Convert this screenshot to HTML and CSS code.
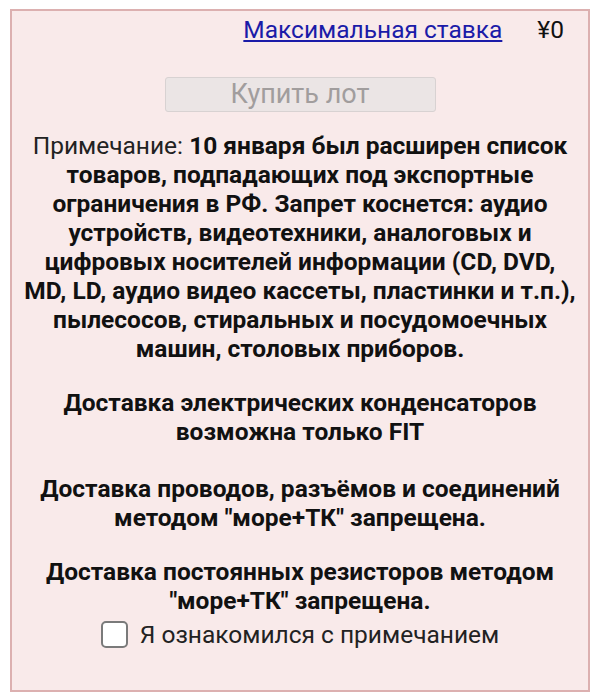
FILE: index.html
```html
<!DOCTYPE html>
<html lang="ru">
<head>
    <meta charset="UTF-8">
    <meta name="viewport" content="width=device-width, initial-scale=1.0">
    <title>Купить лот</title>
    <link rel="stylesheet" href="styles.css">
</head>
<body>

    <div class="lot-box">
        <div class="bid-row">
            <a href="#" class="bid-link">Максимальная ставка</a>
            <span class="bid-value">¥0</span>
        </div>

        <button class="buy-btn" disabled>Купить лот</button>

        <p class="note">
            Примечание: <b>10 января был расширен список товаров, подпадающих под экспортные ограничения в РФ. Запрет коснется: аудио устройств, видеотехники, аналоговых и цифровых носителей информации (CD, DVD, MD, LD, аудио видео кассеты, пластинки и т.п.), пылесосов, стиральных и посудомоечных машин, столовых приборов.</b>
        </p>

        <p class="warn">Доставка электрических конденсаторов<br>возможна только FIT</p>
        <p class="warn wide">Доставка проводов, разъёмов и соединений<br>методом "море+ТК" запрещена.</p>
        <p class="warn">Доставка постоянных резисторов методом<br>"море+ТК" запрещена.</p>

        <label class="agree">
            <input type="checkbox" class="agree-box">
            <span>Я ознакомился с примечанием</span>
        </label>
    </div>

</body>
</html>
```

FILE: styles.css
```css
body {
    margin: 0;
    background-color: #fff;
    font-family: Roboto, "Noto Sans", Arial, sans-serif;
    color: #1a1a1a;
}

.lot-box {
    margin: 9px 7px 0 10px;
    height: 683px;
    box-sizing: border-box;
    border: 2px solid #dcb0b0;
    background-color: #f9eaea;
    padding: 4px 10px 0;
    text-align: center;
    font-size: 24.5px;
    line-height: 29px;
}

.bid-row {
    display: flex;
    justify-content: flex-end;
    gap: 35px;
    padding-right: 14px;
}

.bid-link {
    color: #1b1ba8;
}

.bid-value {
    color: #111;
}

.buy-btn {
    display: block;
    margin: 33px auto 0;
    width: 271px;
    height: 35px;
    padding: 0;
    border: 1px solid #d8d2d2;
    border-radius: 3px;
    background-color: #ebe5e5;
    color: #a19d9d;
    font-family: Roboto, sans-serif;
    font-size: 27px;
    line-height: 33px;
}

.note {
    margin: 19px 0 0;
    color: #222;
}

.note b {
    font-weight: 700;
    color: #111;
}

.warn {
    margin: 25px 0 0;
    font-weight: 700;
    color: #111;
}

.warn.wide {
    margin-top: 28px;
}

.agree {
    display: flex;
    align-items: center;
    justify-content: center;
    gap: 12px;
    margin-top: 5px;
    color: #222;
}

.agree-box {
    appearance: none;
    margin: 0;
    width: 27px;
    height: 27px;
    border: 2px solid #7a7a7a;
    border-radius: 5px;
    background-color: #fff;
}
```
